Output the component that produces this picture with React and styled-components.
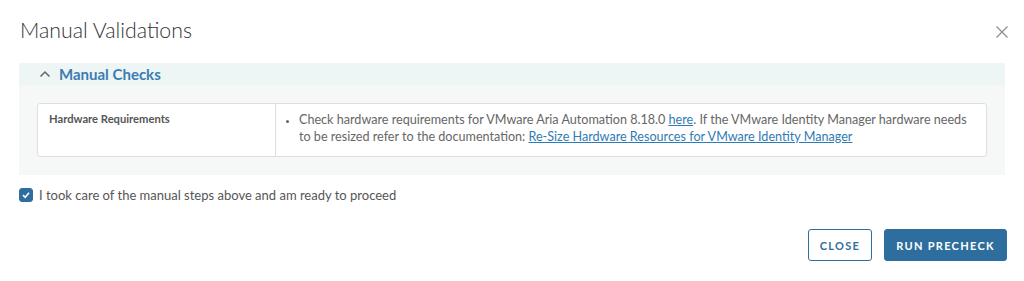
import React, { useState } from 'react';
import styled, { createGlobalStyle } from 'styled-components';

const GlobalStyle = createGlobalStyle`
  html, body {
    margin: 0;
    padding: 0;
    background: #ffffff;
  }
  body {
    font-family: Lato, 'Open Sans', sans-serif;
    color: #565656;
  }
`

const Modal = styled.div`
  width: 1024px;
  height: 281px;
  box-sizing: border-box;
  padding: 17px 17px 0 19px;
  display: flex;
  flex-direction: column;
`
const Header = styled.div`
  display: flex;
  justify-content: space-between;
  align-items: flex-start;
  height: 46px;
`
const Title = styled.h3`
  margin: 0 0 0 1px;
  font-size: 21.3px;
  line-height: 26px;
  font-weight: 300;
  color: #333333;
`
const CloseX = styled.button`
  border: none;
  background: none;
  padding: 0;
  margin-top: 8px;
  margin-right: -2px;
  width: 14px;
  height: 14px;
  cursor: pointer;
`
//Accordion
const Panel = styled.div`
  width: 986px;
  display: flex;
  flex-direction: column;
`
const PanelHeader = styled.div`
  height: 22px;
  background: #edf5f5;
  display: flex;
  align-items: center;
  gap: 8px;
  padding-left: 20px;
`
const PanelTitle = styled.span`
  font-size: 15px;
  font-weight: 700;
  color: #3a7db4;
`
const PanelBody = styled.div`
  background: #f6f8f7;
  padding: 18px 18px 18px 18px;
`
const Table = styled.div`
  display: grid;
  grid-template-columns: 237px 1fr;
  background: #ffffff;
  border: 1px solid #dedede;
  border-radius: 3px;
  min-height: 52px;
`
const Cell = styled.div`
  padding: ${props => props.pad ? props.pad : "8px 12px"};
  border-left: ${props => props.divider ? "1px solid #dedede" : "none"};
  font-size: ${props => props.size ? props.size : "12px"};
  font-weight: ${props => props.weight ? props.weight : 400};
  line-height: 17px;
  color: ${props => props.color ? props.color : "#565656"};
`
const Bullets = styled.ul`
  margin: 0;
  padding-left: 11px;
  li {
    font-size: 12.6px;
    line-height: 17px;
    color: #666666;
  }
  li::marker {
    font-size: 10px;
  }
`
const Link = styled.a`
  color: #2f7bb5;
  text-decoration: underline;
`
//Confirm
const ConfirmRow = styled.label`
  display: flex;
  align-items: center;
  gap: 6px;
  margin-top: 12px;
  font-size: 13px;
  color: #565656;
`
const Box = styled.span`
  width: 14px;
  height: 14px;
  border-radius: 3px;
  background: ${props => props.checked ? "#2e6e9e" : "#ffffff"};
  border: 1px solid #2e6e9e;
  box-sizing: border-box;
  display: flex;
  align-items: center;
  justify-content: center;
`
const Footer = styled.div`
  display: flex;
  justify-content: flex-end;
  gap: 12px;
  margin-top: 26px;
`
const Button = styled.button`
  height: 32px;
  width: ${props => props.w};
  padding: 0;
  border-radius: 3px;
  border: 1px solid #2e6e9e;
  background: ${props => props.primary ? "#2e6e9e" : "#ffffff"};
  color: ${props => props.primary ? "#ffffff" : "#2e6e9e"};
  font-family: Lato, 'Open Sans', sans-serif;
  font-size: 11px;
  font-weight: 700;
  letter-spacing: 1.3px;
  cursor: pointer;
`

export default function App() {
  const [checked, setChecked] = useState(true)
  return (
    <Modal>
      <GlobalStyle />
      <Header>
        <Title>Manual Validations</Title>
        <CloseX aria-label="close">
          <svg width="14" height="14" viewBox="0 0 14 14">
            <path d="M1.5 1.5 L12.5 12.5 M12.5 1.5 L1.5 12.5" stroke="#8c8c8c" strokeWidth="1.2" fill="none" />
          </svg>
        </CloseX>
      </Header>
      <Panel>
        <PanelHeader>
          <svg width="12" height="8" viewBox="0 0 12 8">
            <path d="M1.5 6.5 L6 2 L10.5 6.5" stroke="#666666" strokeWidth="1.5" fill="none" />
          </svg>
          <PanelTitle>Manual Checks</PanelTitle>
        </PanelHeader>
        <PanelBody>
          <Table>
            <Cell weight={700} size="11.2px" color="#565656" pad="6px 11px">Hardware Requirements</Cell>
            <Cell divider pad="7px 12px 0 12px">
              <Bullets>
                <li>
                  Check hardware requirements for VMware Aria Automation 8.18.0 <Link href="#">here</Link>. If the VMware Identity Manager hardware needs to be resized refer to the documentation: <Link href="#">Re-Size Hardware Resources for VMware Identity Manager</Link>
                </li>
              </Bullets>
            </Cell>
          </Table>
        </PanelBody>
      </Panel>
      <ConfirmRow onClick={() => setChecked(!checked)}>
        <Box checked={checked}>
          {checked && (
            <svg width="10" height="10" viewBox="0 0 10 10">
              <path d="M2 5.2 L4.2 7.3 L8 2.8" stroke="#ffffff" strokeWidth="1.6" fill="none" />
            </svg>
          )}
        </Box>
        I took care of the manual steps above and am ready to proceed
      </ConfirmRow>
      <Footer>
        <Button w="64px">CLOSE</Button>
        <Button primary w="123px">RUN PRECHECK</Button>
      </Footer>
    </Modal>
  );
}
